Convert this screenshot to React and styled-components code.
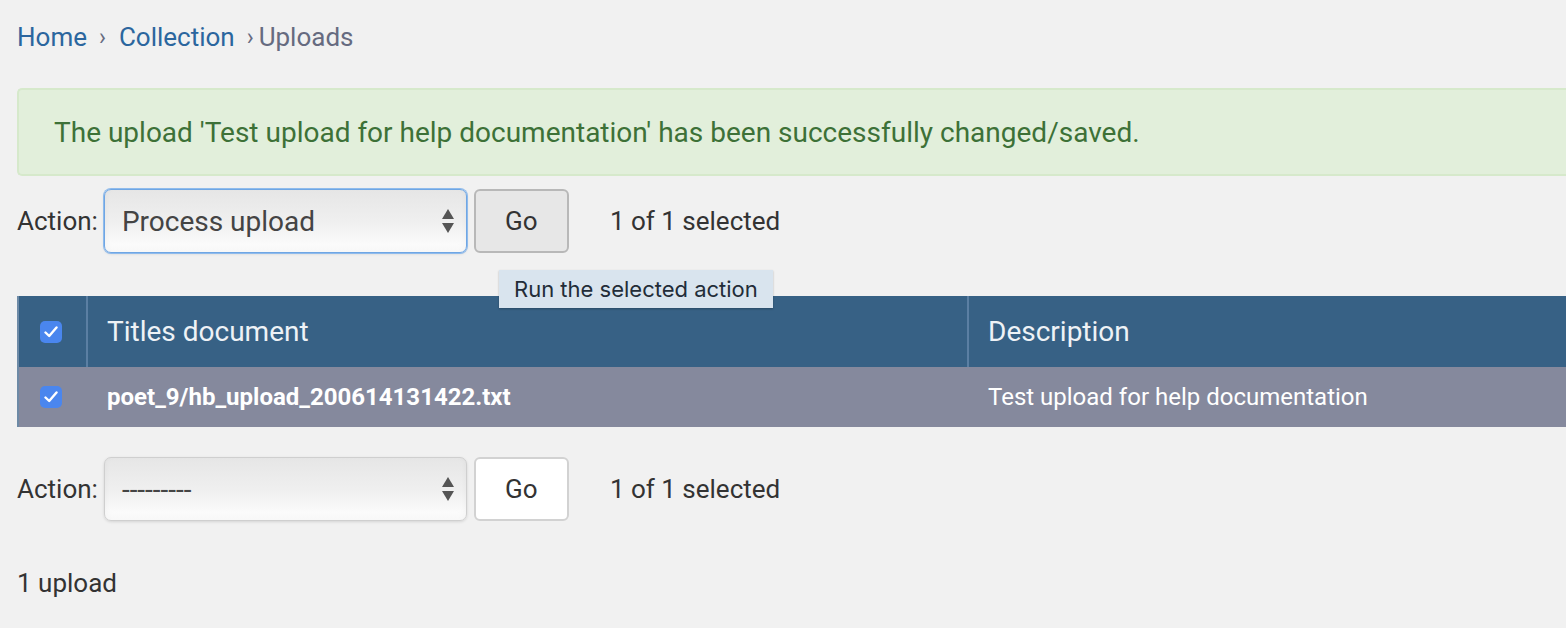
import React from 'react';
import styled, { createGlobalStyle, css } from 'styled-components';

const GlobalStyle = createGlobalStyle`
  html, body {
    margin: 0;
    padding: 0;
    background: #f1f1f1;
    overflow: hidden;
  }
  body {
    font-family: Roboto, "Liberation Sans", sans-serif;
    color: #333;
  }
`;

const Page = styled.div`
  width: 1566px;
  height: 628px;
  padding-left: 17px;
  box-sizing: border-box;
`;

const Breadcrumbs = styled.nav`
  display: flex;
  align-items: center;
  height: 30px;
  padding-top: 22px;
  font-size: 26px;
  color: #666b80;
`;

const Crumb = styled.a`
  color: #2b669e;
  text-decoration: none;
`;

const Sep = styled.span`
  margin: 0 13px 0 12px;
  font-size: 23px;
  color: #666b80;
  ${p =>
    p.tight &&
    css`
      margin-right: 5px;
    `}
`;

const Message = styled.div`
  margin-top: 36px;
  height: 88px;
  box-sizing: border-box;
  border: 2px solid #d6e9cb;
  border-right: none;
  border-radius: 5px 0 0 5px;
  background: #e2efdb;
  color: #3d7137;
  font-size: 28px;
  display: flex;
  align-items: center;
  padding-left: 35px;
`;

const Actions = styled.div`
  display: flex;
  align-items: center;
  height: 64px;
  margin-top: ${p => p.top}px;
  font-size: 26px;
  color: #333;
`;

const Label = styled.label`
  margin-right: 6px;
`;

const SelectBox = styled.div`
  position: relative;
  width: 363px;
  height: 64px;
  box-sizing: border-box;
  border-radius: 7px;
  border: 1px solid ${p => (p.focused ? '#6fa6e4' : '#cfcfcf')};
  box-shadow: ${p => (p.focused ? '0 0 0 1px #8fbbec, ' : '')}inset 0 -3px 6px rgba(0, 0, 0, 0.04),
    0 1px 3px rgba(0, 0, 0, 0.12);
  background: linear-gradient(to bottom, #e6e6e6 0%, #f0f0f0 55%, #ffffff 100%);
  display: flex;
  align-items: center;
  padding-left: 17px;
  color: #444;
  font-size: 28px;
`;

const Arrows = styled.svg`
  position: absolute;
  right: 11px;
  top: 50%;
  transform: translateY(-50%);
`;

const GoButton = styled.button`
  position: relative;
  margin-left: 7px;
  width: 95px;
  height: 64px;
  box-sizing: border-box;
  border-radius: 6px;
  border: 2px solid ${p => (p.pressed ? '#b8b8b8' : '#d2d2d2')};
  background: ${p => (p.pressed ? '#e7e7e7' : '#ffffff')};
  font-family: Roboto, "Liberation Sans", sans-serif;
  font-size: 26px;
  color: #333;
  padding: 0;
`;

const Tooltip = styled.div`
  position: absolute;
  left: 23px;
  top: 79px;
  width: 274px;
  height: 38px;
  box-sizing: border-box;
  background: #d9e4ee;
  box-shadow: 0 1px 2px rgba(0, 0, 0, 0.25);
  font-family: Inter, "Liberation Sans", sans-serif;
  font-size: 22px;
  color: #222c38;
  display: flex;
  align-items: center;
  justify-content: center;
  white-space: nowrap;
  z-index: 2;
`;

const Counter = styled.span`
  margin-left: 41px;
`;

const Table = styled.div`
  margin-top: 43px;
  width: 1700px;
  border-left: 2px solid #6d8aa6;
`;

const Row = styled.div`
  display: grid;
  grid-template-columns: 67px 2px 879px 2px 1fr;
  align-items: stretch;
  height: ${p => (p.header ? 71 : 60)}px;
  background: ${p => (p.header ? '#376185' : '#85899d')};
  color: #fff;
  font-size: ${p => (p.header ? '28px' : '24px')};
`;

const Cell = styled.div`
  display: flex;
  align-items: center;
  padding-left: ${p => (p.box ? 21 : 19)}px;
  font-weight: ${p => (p.bold ? 700 : 400)};
  color: ${p => (p.header ? '#eef2f6' : '#fff')};
`;

const Divider = styled.div`
  background: ${p => (p.show ? '#5b7fa3' : 'transparent')};
`;

const Checkbox = styled.span`
  width: 22px;
  height: 22px;
  border-radius: 5px;
  background: #4a86ee;
  display: flex;
  align-items: center;
  justify-content: center;
`;

const Footer = styled.p`
  margin: 47px 0 0;
  font-size: 26px;
  color: #333;
`;

const SelectArrows = () => (
  <Arrows width="14" height="26" viewBox="0 0 14 26">
    <path d="M7 1 L13 11 L1 11 Z" fill="#555" />
    <path d="M7 25 L13 15 L1 15 Z" fill="#555" />
  </Arrows>
);

const Check = () => (
  <Checkbox>
    <svg width="14" height="12" viewBox="0 0 14 12">
      <path d="M1.5 6.5 L5.2 10 L12.5 1.5" fill="none" stroke="#fff" strokeWidth="2.4" strokeLinecap="round" strokeLinejoin="round" />
    </svg>
  </Checkbox>
);

const ActionBar = ({ top, value, focused, pressed, tooltip }) => (
  <Actions top={top}>
    <Label>Action:</Label>
    <SelectBox focused={focused}>
      {value}
      <SelectArrows />
    </SelectBox>
    <GoButton pressed={pressed}>
      Go
      {tooltip && <Tooltip>Run the selected action</Tooltip>}
    </GoButton>
    <Counter>1 of 1 selected</Counter>
  </Actions>
);

const App = () => (
  <Page>
    <GlobalStyle />
    <Breadcrumbs>
      <Crumb href="#">Home</Crumb>
      <Sep>›</Sep>
      <Crumb href="#">Collection</Crumb>
      <Sep tight>›</Sep>
      Uploads
    </Breadcrumbs>

    <Message>The upload 'Test upload for help documentation' has been successfully changed/saved.</Message>

    <ActionBar top={13} value="Process upload" focused pressed tooltip />

    <Table>
      <Row header>
        <Cell box>
          <Check />
        </Cell>
        <Divider show />
        <Cell header>Titles document</Cell>
        <Divider show />
        <Cell header>Description</Cell>
      </Row>
      <Row>
        <Cell box>
          <Check />
        </Cell>
        <Divider />
        <Cell bold>poet_9/hb_upload_200614131422.txt</Cell>
        <Divider />
        <Cell>Test upload for help documentation</Cell>
      </Row>
    </Table>

    <ActionBar top={30} value="---------" />

    <Footer>1 upload</Footer>
  </Page>
);

export default App;
